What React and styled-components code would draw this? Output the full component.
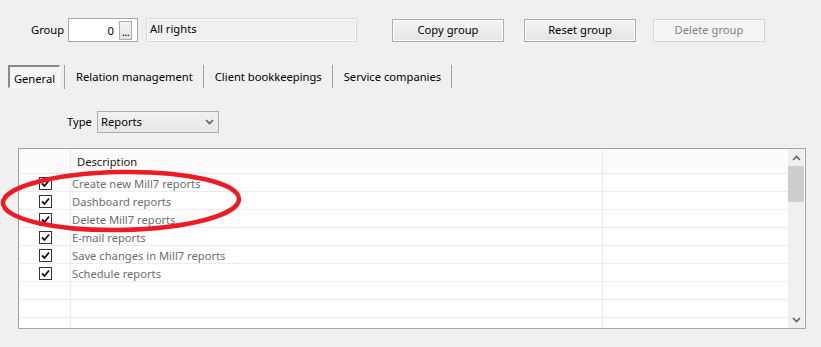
import React from "react";
import styled, { createGlobalStyle } from "styled-components";

const Global = createGlobalStyle`
  html, body { margin: 0; padding: 0; background: #f0f0f0; }
  body { font-family: "Noto Sans", "DejaVu Sans", sans-serif; font-size: 11.2px; color: #000; }
  * { box-sizing: border-box; }
`;

const Page = styled.div`
  position: relative;
  width: 821px;
  height: 347px;
  padding-top: 18px;
  overflow: hidden;
`;

const TopRow = styled.div`
  display: flex;
  align-items: center;
  height: 24px;
  padding-left: 31px;
`;

const Label = styled.span`
  line-height: 16px;
  width: ${(p) => p.$w}px;
  flex: none;
`;

const NumberBox = styled.div`
  width: 70px;
  height: 24px;
  background: #fff;
  border: 1px solid #a9a9a9;
  display: flex;
  align-items: center;
  justify-content: flex-end;
  padding-right: 5px;
  gap: 5px;
`;

const EllipsisButton = styled.div`
  width: 13px;
  height: 19px;
  border: 1px solid #adadad;
  background: linear-gradient(#f3f3f3, #e3e3e3);
  font-size: 11px;
  line-height: 20px;
  text-align: center;
  letter-spacing: -0.5px;
  overflow: hidden;
`;

const NameBox = styled.div`
  width: 211px;
  height: 24px;
  margin-left: 8px;
  border: 1px solid #d9d9d9;
  box-shadow: inset 0 0 0 1px #fafafa;
  background: #f0f0f0;
  padding: 2px 3px 0;
  line-height: 16px;
`;

const Button = styled.div`
  width: 112px;
  height: 23px;
  margin-left: ${(p) => p.$gap}px;
  border: 1px solid ${(p) => (p.$disabled ? "#d5d5d5" : "#adadad")};
  box-shadow: inset 0 0 0 1px ${(p) => (p.$disabled ? "#f8f8f8" : "#fbfbfb")};
  background: ${(p) => (p.$disabled ? "#f4f4f4" : "linear-gradient(#f5f5f5, #e4e4e4)")};
  color: ${(p) => (p.$disabled ? "#838383" : "#000")};
  display: flex;
  align-items: center;
  justify-content: center;
  padding-bottom: 1px;
`;

const TabRow = styled.div`
  display: flex;
  align-items: stretch;
  height: 23px;
  margin-top: 23px;
  padding-left: 8px;
`;

const Tab = styled.div`
  height: 23px;
  display: flex;
  align-items: center;
  padding: 0 ${(p) => p.$pad}px 0 ${(p) => p.$padL}px;
  border-right: 1px solid #a0a0a0;
`;

const ActiveTab = styled.div`
  width: 52px;
  height: 23px;
  display: flex;
  align-items: center;
  justify-content: center;
  padding-top: 2px;
  border-top: 2px solid #8a8a8a;
  border-left: 2px solid #8a8a8a;
  border-bottom: 1px solid #ffffff;
  border-right: 1px solid #ffffff;
  background-color: #f7f7f7;
  background-image: repeating-conic-gradient(#ffffff 0 25%, #ececec 0 50%);
  background-size: 2px 2px;
`;

const TabSep = styled.div`
  width: 5px;
  border-right: 1px solid #a0a0a0;
  height: 24px;
`;

const TypeRow = styled.div`
  display: flex;
  align-items: center;
  height: 22px;
  margin-top: 23px;
  padding-left: 67px;
`;

const Select = styled.div`
  width: 122px;
  height: 22px;
  border: 1px solid #acacac;
  background: linear-gradient(#f2f2f2, #e6e6e6);
  display: flex;
  align-items: center;
  justify-content: space-between;
  padding: 0 4px 1px 3px;
`;

const Table = styled.div`
  margin: 15px 0 0 18px;
  width: 788px;
  height: 181px;
  border: 1px solid #a5a5a5;
  background: #fff;
  display: flex;
  overflow: hidden;
`;

const Grid = styled.div`
  flex: 1;
  display: grid;
  grid-template-columns: 52px 532px 185px;
  grid-auto-rows: 18px;
  grid-template-rows: 25px;
  align-content: start;
  overflow: hidden;
`;

const HeadCell = styled.div`
  background: #fcfcfc;
  border-bottom: 1px solid #e3e8ee;
  border-right: ${(p) => (p.$last ? "none" : "1px solid #e3ecf6")};
  padding: 5px 0 0 6px;
  line-height: 16px;
  color: #1a1a1a;
`;

const Cell = styled.div`
  border-bottom: 1px solid #ececec;
  border-right: ${(p) => (p.$last ? "none" : "1px solid #ececec")};
  display: flex;
  align-items: center;
  justify-content: ${(p) => (p.$center ? "center" : "flex-start")};
  padding-left: ${(p) => (p.$center ? 0 : 1)}px;
  padding-top: 1px;
  color: #6d6d6d;
  white-space: nowrap;
`;

const Check = styled.div`
  width: 13px;
  height: 13px;
  border: 1px solid #333;
  background: #fff;
  display: flex;
  align-items: center;
  justify-content: center;
  margin-left: 2px;
`;

const ScrollBar = styled.div`
  width: 17px;
  background: #f0f0f0;
  display: flex;
  flex-direction: column;
  align-items: stretch;
  border-right: 1px solid #fff;
`;

const ScrollArrow = styled.div`
  height: 17px;
  display: flex;
  align-items: center;
  justify-content: center;
`;

const ScrollTrack = styled.div`
  flex: 1;
  display: flex;
  flex-direction: column;
`;

const Thumb = styled.div`
  height: 36px;
  background: #cdcdcd;
`;

const Annotation = styled.svg`
  position: absolute;
  left: 0;
  top: 0;
  pointer-events: none;
`;

const Chevron = ({ up }) => (
  <svg width="9" height="6" viewBox="0 0 9 6">
    <path
      d={up ? "M1 5 L4.5 1.5 L8 5" : "M1 1 L4.5 4.5 L8 1"}
      fill="none"
      stroke="#606060"
      strokeWidth="1.6"
    />
  </svg>
);

const CheckMark = () => (
  <svg width="9" height="9" viewBox="0 0 9 9">
    <path d="M1 4.5 L3.5 7 L8 1.5" fill="none" stroke="#111" strokeWidth="1.8" />
  </svg>
);

const rows = [
  "Create new Mill7 reports",
  "Dashboard reports",
  "Delete Mill7 reports",
  "E-mail reports",
  "Save changes in Mill7 reports",
  "Schedule reports",
  "",
  "",
  "",
];

export default function App() {
  return (
    <>
      <Global />
      <Page>
        <TopRow>
          <Label $w={37}>Group</Label>
          <NumberBox>
            <span>0</span>
            <EllipsisButton>...</EllipsisButton>
          </NumberBox>
          <NameBox>All rights</NameBox>
          <Button $gap={35}>Copy group</Button>
          <Button $gap={20}>Reset group</Button>
          <Button $gap={17} $disabled>Delete group</Button>
        </TopRow>

        <TabRow>
          <ActiveTab>General</ActiveTab>
          <TabSep />
          <Tab $padL={11} $pad={10}>Relation management</Tab>
          <Tab $padL={11} $pad={10}>Client bookkeepings</Tab>
          <Tab $padL={11} $pad={10}>Service companies</Tab>
        </TabRow>

        <TypeRow>
          <Label $w={30}>Type</Label>
          <Select>
            <span>Reports</span>
            <Chevron />
          </Select>
        </TypeRow>

        <Table>
          <Grid>
            <HeadCell />
            <HeadCell>Description</HeadCell>
            <HeadCell $last />
            {rows.map((r, i) => (
              <React.Fragment key={i}>
                <Cell $center>
                  {r && (
                    <Check>
                      <CheckMark />
                    </Check>
                  )}
                </Cell>
                <Cell>{r}</Cell>
                <Cell $last />
              </React.Fragment>
            ))}
          </Grid>
          <ScrollBar>
            <ScrollArrow>
              <Chevron up />
            </ScrollArrow>
            <ScrollTrack>
              <Thumb />
            </ScrollTrack>
            <ScrollArrow>
              <Chevron />
            </ScrollArrow>
          </ScrollBar>
        </Table>

        <Annotation width="821" height="347" viewBox="0 0 821 347">
          <ellipse
            cx="121"
            cy="201"
            rx="118"
            ry="29"
            fill="none"
            stroke="#ec1c24"
            strokeWidth="4.5"
            transform="rotate(-1 121 201)"
          />
        </Annotation>
      </Page>
    </>
  );
}
